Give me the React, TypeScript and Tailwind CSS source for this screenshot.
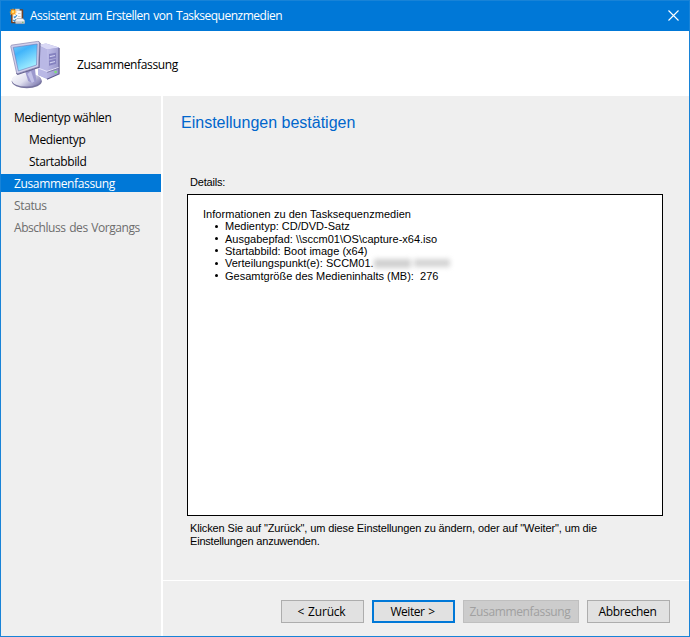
import React from "react";

const UI = "font-['Open_Sans','Noto_Sans',sans-serif]";
const SANS = "font-['Liberation_Sans',Arial,sans-serif]";

function WizardIcon() {
  return (
    <svg width="16" height="17" viewBox="0 0 16 17" className="shrink-0">
      <rect x="2" y="1.3" width="12.2" height="13.9" rx="0.8" fill="#70442b" />
      <rect x="3.6" y="2.6" width="9" height="11.4" fill="#fbf9f6" />
      <rect x="6" y="0.8" width="4.6" height="2.2" fill="#d4d4d6" />
      <path d="M9 5.5h2.6M9 8.5h2.6" stroke="#c9c7c6" strokeWidth="0.9" />
      <path d="M4.8 8.5l1 1.2L8 7.2M4.4 12l1 1.2 1.6-1.9" stroke="#3a8ed0" strokeWidth="1.2" fill="none" />
      <path d="M4 0l.8 2.1L7.1 1l-1 2.2 2.2.7-2.2.9.9 2.1-2.2-1L4 8l-.9-2.1-2.1 1 .9-2.1L.3 3.9l1.9-.7-.9-2.1 2 1z" fill="#ffa51f" />
      <circle cx="4" cy="3.8" r="1.2" fill="#ffe17b" />
      <path d="M6.6 12.4l1.4-1.9h6l1.7 1.9v3.2H6.6z" fill="#eff0f2" stroke="#898e99" strokeWidth="0.5" />
      <path d="M7 13.3h8.4v2H7z" fill="#c4c6cc" />
      <rect x="13" y="13.8" width="1.5" height="0.9" fill="#59b957" />
    </svg>
  );
}

function ComputerIcon() {
  return (
    <svg width="52" height="50" viewBox="0 0 52 50" className="mt-[2px] shrink-0">
      <defs>
        <linearGradient id="screen" x1="0" y1="0" x2="0.5" y2="1">
          <stop offset="0" stopColor="#7dcdf6" />
          <stop offset="0.35" stopColor="#41b4fa" />
          <stop offset="1" stopColor="#a4f0ff" />
        </linearGradient>
        <linearGradient id="tower" x1="0" y1="0" x2="1" y2="0.4">
          <stop offset="0" stopColor="#c3c2ec" />
          <stop offset="1" stopColor="#9a98cb" />
        </linearGradient>
        <linearGradient id="foot" x1="0" y1="0" x2="1" y2="0.6">
          <stop offset="0" stopColor="#fff" />
          <stop offset="0.55" stopColor="#e0e0ef" />
          <stop offset="1" stopColor="#8b88b9" />
        </linearGradient>
      </defs>
      <path d="M28 5l8-1.4L49 7.5v26.3L37 39l-9-4z" fill="#aaa9dc" />
      <path d="M28 5l8-1.4L49 7.5 37 9.6z" fill="#d9d8f5" />
      <path d="M28 5.6l9 4v29L28 35z" fill="#b9b8e5" />
      <path d="M37 9.6L49 7.5v26.3L37 39z" fill="url(#tower)" />
      <path d="M49.1 8v26L37 39.2" fill="none" stroke="#5b578c" strokeWidth="1.1" />
      <path d="M28 28l9 3.4 11.6-4" fill="none" stroke="#e8e7fb" strokeWidth="0.9" />
      <path d="M37.2 32.4L48.6 28.4" stroke="#77749f" strokeWidth="0.8" />
      <path d="M39 14l7-1.2v5l-7 1.6zM39 20.4l7-1.6v5l-7 1.9z" fill="#8582c0" />
      <path d="M39.8 16.6l5.2-1.1M39.8 22.8l5.2-1.3" stroke="#cfcff0" strokeWidth="1.2" />
      <circle cx="45.6" cy="32" r="1.3" fill="#7be572" />
      <ellipse cx="16.8" cy="41.2" rx="15" ry="7" fill="#77749f" />
      <ellipse cx="16.4" cy="39.9" rx="14.6" ry="6.7" fill="url(#foot)" />
      <path d="M15 31l10-2 1.4 12.4-4 1.9-4.2-2.4z" fill="#9c99ce" />
      <path d="M21 31l3.4 10.5-2.6 1.4L17.4 34z" fill="#c3c2e8" />
      <path d="M29.4 2l1.2 1.2-1 24.5L7.6 34.9 6 33.5z" fill="#65628f" />
      <path d="M.8 6.7Q.6 5.4 1.8 5.1L27.8 1.4q1.6-.3 1.6 1.3l-.8 24L8.1 33.5q-1.3.3-1.6-1z" fill="#d1d0ec" stroke="#8684af" strokeWidth="0.7" />
      <path d="M3.2 7.4l24-3.4-.7 21L8.4 31z" fill="url(#screen)" stroke="#6f78b8" strokeWidth="0.6" />
    </svg>
  );
}

function StepItem({ label, className }: { label: string; className: string }) {
  return <div className={`h-[18px] whitespace-nowrap leading-[20px] ${className}`}>{label}</div>;
}

function DialogButton({ label, className }: { label: string; className: string }) {
  return (
    <button className={`flex h-[23px] items-center justify-center whitespace-nowrap pr-[2px] ${className}`}>
      <span>{label}</span>
    </button>
  );
}

function DetailLine({ children }: { children: React.ReactNode }) {
  return (
    <li className="flex h-[12.4px] items-center whitespace-pre leading-[12px]">
      <span className="mr-[7px] ml-3 h-[3px] w-[3px] rounded-full bg-black" />
      <span>{children}</span>
    </li>
  );
}

export default function App() {
  return (
    <div className={`flex h-[637px] w-[690px] flex-col overflow-hidden border border-[#1883d7] bg-[#efefef] text-[12px] tracking-[-0.36px] text-black ${UI}`}>
      <header className="flex h-[30px] shrink-0 items-center bg-[#0078d7] pl-2 text-white">
        <WizardIcon />
        <h1 className="ml-[5px] whitespace-nowrap tracking-[-0.5px] [word-spacing:1px]">Assistent zum Erstellen von Tasksequenzmedien</h1>
        <svg width="11" height="11" viewBox="0 0 11 11" className="mr-[10px] mb-px ml-auto">
          <path d="M.5.5l10 10M10.5.5l-10 10" stroke="#fff" strokeWidth="1.1" />
        </svg>
      </header>
      <section className="flex h-[65px] shrink-0 items-center bg-white pl-[9px]">
        <ComputerIcon />
        <h2 className="mt-[2px] ml-[15px] whitespace-nowrap">Zusammenfassung</h2>
      </section>
      <div className="flex min-h-0 flex-1">
        <nav className="flex w-[162px] shrink-0 flex-col gap-1 border-r-2 border-white pt-3">
          <StepItem label="Medientyp wählen" className="pl-[13px]" />
          <StepItem label="Medientyp" className="pl-7" />
          <StepItem label="Startabbild" className="pl-7" />
          <StepItem label="Zusammenfassung" className="bg-[#0078d7] pl-[13px] text-white" />
          <StepItem label="Status" className="pl-[13px] text-[#6d6d6d]" />
          <StepItem label="Abschluss des Vorgangs" className="pl-[13px] tracking-[-0.45px] text-[#6d6d6d] [word-spacing:1px]" />
        </nav>
        <div className="flex min-w-0 flex-1 flex-col">
          <main className={`h-[485px] shrink-0 border-b border-white pt-[17px] pl-6 text-[11px] tracking-normal ${SANS}`}>
            <h3 className="-ml-[6px] h-5 text-[16px] leading-5 whitespace-nowrap text-[#0066cc]">Einstellungen bestätigen</h3>
            <p className="mt-[42px] ml-[3px] h-[14px] leading-[14px] tracking-[-0.2px]">Details:</p>
            <div className="mt-[5px] h-[322px] w-[476px] border border-black bg-white pt-[13px] pl-[15px]">
              <p className="h-[12px] leading-[12px] whitespace-nowrap tracking-[0.04px]">Informationen zu den Tasksequenzmedien</p>
              <ul>
                <DetailLine>Medientyp: CD/DVD-Satz</DetailLine>
                <DetailLine>{"Ausgabepfad: \\\\sccm01\\OS\\capture-x64.iso"}</DetailLine>
                <DetailLine>Startabbild: Boot image (x64)</DetailLine>
                <li className="flex h-[12.4px] items-center whitespace-pre">
                  <span className="mr-[7px] ml-3 h-[3px] w-[3px] rounded-full bg-black" />
                  <span className="leading-[12px]">Verteilungspunkt(e): SCCM01.</span>
                  <span className="flex h-[10px] w-[76px] items-center justify-between blur-[2.5px]">
                    <span className="h-[9px] w-[37px] bg-[#d0d0d0]" />
                    <span className="h-[8px] w-[36px] bg-[#d4d4d4]" />
                  </span>
                </li>
                <DetailLine>{"Gesamtgröße des Medieninhalts (MB):  276"}</DetailLine>
              </ul>
            </div>
            <div className="mt-[6px] ml-[3px] leading-[13px] tracking-[-0.12px] whitespace-nowrap">
              <p>Klicken Sie auf "Zurück", um diese Einstellungen zu ändern, oder auf "Weiter", um die</p>
              <p className="tracking-[-0.2px]">Einstellungen anzuwenden.</p>
            </div>
          </main>
          <footer className="flex justify-end gap-2 pt-[19px] pr-[19px]">
            <DialogButton label="< Zurück" className="w-[83px] border border-[#adadad] bg-[#e1e1e1] tracking-[-0.2px] [word-spacing:1px]" />
            <DialogButton label="Weiter >" className="w-[83px] border-2 border-[#0078d7] bg-[#e1e1e1] tracking-[-0.45px] [word-spacing:1px]" />
            <DialogButton label="Zusammenfassung" className="w-[116px] border border-[#bfbfbf] bg-[#cccccc] text-[#a0a0a0]" />
            <DialogButton label="Abbrechen" className="w-[83px] border border-[#adadad] bg-[#e1e1e1]" />
          </footer>
        </div>
      </div>
    </div>
  );
}
